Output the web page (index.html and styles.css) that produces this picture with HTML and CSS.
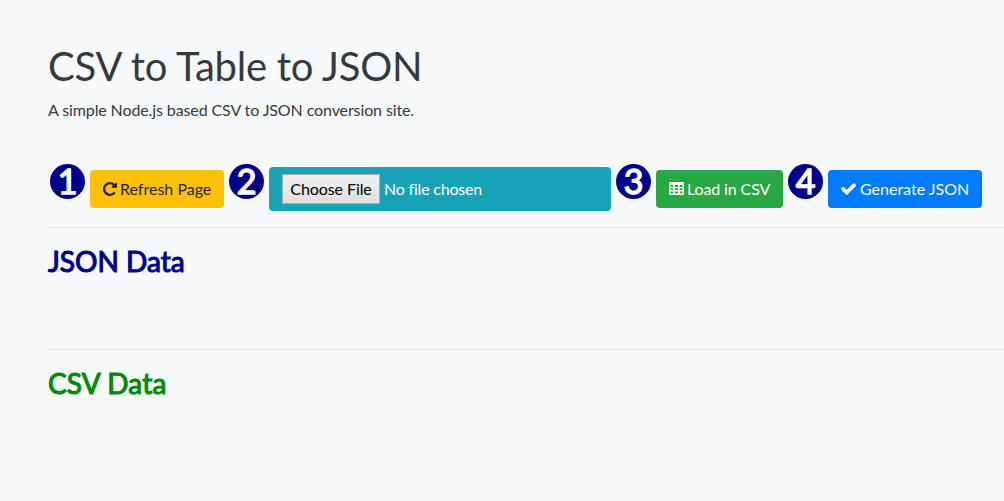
FILE: index.html
```html
<!DOCTYPE html>
<html lang="en">
<head>
<meta charset="utf-8">
<title>CSV to Table to JSON</title>
<link rel="stylesheet" href="styles.css">
</head>
<body>
<main class="page">
  <h1 class="title">CSV to Table to JSON</h1>
  <p class="lead">A simple Node.js based CSV to JSON conversion site.</p>
  <div class="toolbar">
    <span class="step">1</span>
    <button class="btn btn-warning"><svg class="icon icon-refresh" viewBox="0 0 1536 1536"><path d="M1536 128v448q0 26-19 45t-45 19h-448q-42 0-59-40-17-39 14-69l138-138q-148-137-349-137-104 0-198.500 40.500t-163.500 109.500-109.500 163.500-40.500 198.500 40.500 198.500 109.500 163.500 163.500 109.500 198.500 40.500q119 0 225-52t179-147q7-10 23-12 15 0 25 9l137 138q9 8 9.500 20.500t-7.500 22.500q-109 132-264 204.500t-327 72.500q-156 0-298-61t-245-164-164-245-61-298 61-298 164-245 245-164 298-61q147 0 284.500 55.500t244.500 156.500l130-129q29-31 70-14 39 17 39 59z"/></svg><span>Refresh Page</span></button>
    <span class="step">2</span>
    <div class="filebox"><button class="choose">Choose File</button><span class="filename">No file chosen</span></div>
    <span class="step">3</span>
    <button class="btn btn-success"><svg class="icon icon-table" viewBox="0 0 15 13"><path fill-rule="evenodd" d="M1.300 0h12.400Q15 0 15 1.300v10.400q0 1.300-1.300 1.300H1.300Q0 13 0 11.700V1.300Q0 0 1.300 0zM1.400 3v2h2.900V3zm4.400 0v2h3.400V3zm4.900 0v2h2.900V3zM1.400 6.200v1.900h2.900V6.200zm4.400 0v1.900h3.400V6.200zm4.900 0v1.900h2.900V6.200zM1.400 9.400v2.200h2.900V9.400zm4.400 0v2.200h3.400V9.400zm4.900 0v2.200h2.900V9.400z"/></svg><span>Load in CSV</span></button>
    <span class="step">4</span>
    <button class="btn btn-primary"><svg class="icon icon-check" viewBox="0 0 1550 1188"><path d="M1550 232q0 40-28 68l-860 860q-28 28-68 28t-68-28L28 662Q0 634 0 594t28-68l136-136q28-28 68-28t68 28l294 295L1250 28q28-28 68-28t68 28l136 136q28 28 28 68z"/></svg><span>Generate JSON</span></button>
  </div>
  <section class="result json"><h2>JSON Data</h2></section>
  <section class="result csv"><h2>CSV Data</h2></section>
</main>
</body>
</html>
```

FILE: styles.css
```css
* { box-sizing: border-box; }
body { margin: 0; background: #f8f9fa; color: #343a40; font: 400 16px/24px Lato, sans-serif; overflow: hidden; }
.page { padding: 42px 0 0 48px; }
.title { margin: 0 0 8px; font-size: 40px; line-height: 48px; font-weight: 400; letter-spacing: -.24px; }
.lead { margin: 0; letter-spacing: -.11px; }
.toolbar { display: flex; height: 105px; padding-top: 41px; white-space: nowrap; align-items: flex-start; }
.step { width: 35px; height: 35px; margin: 1px 5px 0 2px; flex: none; border-radius: 50%; background: #00008b; color: #fff; font-size: 34px; line-height: 33px; font-weight: 400; -webkit-text-stroke: 1.4px #fff; text-align: center; }
.btn { display: flex; align-items: center; justify-content: flex-start; flex: none; height: 38px; margin: 7px 3px 0 0; padding: 0 0 0 13px; border: 0; border-radius: 4px; color: #fff; font: 16px/24px Lato, sans-serif; }
.btn-warning { width: 134px; background: #ffc107; color: #212529; }
.btn-success { width: 127px; background: #28a745; letter-spacing: -.12px; }
.btn-primary { width: 154px; background: #007bff; }
.icon { fill: currentColor; flex: none; margin-right: 3px; }
.icon-refresh { width: 14px; height: 14px; }
.icon-table { width: 15px; height: 13px; margin-bottom: 1px; }
.icon-check { width: 15px; height: 12px; margin-right: 4px; }
.filebox { display: flex; align-items: center; flex: none; width: 342px; height: 44px; margin: 4px 3px 0 0; padding-left: 13px; background: #17a2b8; border-radius: 4px; color: #fff; gap: 4px; }
.choose { width: 98px; height: 30px; padding: 0; border: 1px solid #acacac; background: linear-gradient(#f2f2f2, #dedede); color: #000; font: 16px/24px Lato, sans-serif; letter-spacing: -.08px; }
.filename { letter-spacing: -.2px; }
.result { height: 122px; padding-top: 16px; border-top: 1px solid #dfe0e1; }
.result h2 { margin: 0; font-size: 28px; line-height: 34px; font-weight: 400; -webkit-text-stroke: 1.1px currentColor; }
.json { color: #00008b; }
.csv { color: #008b00; letter-spacing: .15px; }
```
